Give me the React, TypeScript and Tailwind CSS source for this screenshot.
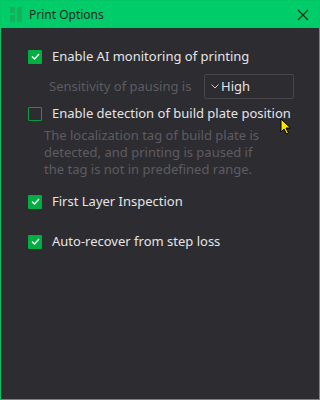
import React from "react";

function Check({ checked }: { checked: boolean }) {
  if (!checked) {
    return <span className="block h-[14px] w-[14px] shrink-0 rounded-[1px] border border-[#0e9b3f]" />;
  }
  return (
    <span className="flex h-[14px] w-[14px] shrink-0 items-center justify-center rounded-[1px] bg-[#00ae42]">
      <svg width="9" height="7" viewBox="0 0 9 7" fill="none">
        <path d="M1 3.5 L3.5 6 L8 1" stroke="#fff" strokeWidth="1.4" />
      </svg>
    </span>
  );
}

function Option({ checked, label }: { checked: boolean; label: string }) {
  return (
    <div className="flex h-[17px] items-center gap-[10px] pl-[27px]">
      <Check checked={checked} />
      <span className="text-[13px] leading-[17px] text-[#e4e4e6]">{label}</span>
    </div>
  );
}

export default function App() {
  return (
    <div
      className="flex h-[400px] w-[320px] flex-col border border-[#00c764] bg-[#2d2c31]"
      style={{ fontFamily: '"Noto Sans", "Open Sans", sans-serif' }}
    >
      <div className="flex h-[27px] shrink-0 items-center bg-[#00cc6a] pl-[9px] pr-[9px]">
        <svg width="12" height="15" viewBox="0 0 12 15" className="mr-[7px]">
          <rect x="0" y="0" width="5" height="6" fill="#17b05a" />
          <rect x="7" y="0" width="5" height="15" fill="#17b05a" />
          <rect x="0" y="8" width="5" height="7" fill="#17b05a" />
        </svg>
        <span className="flex-1 text-[12px] text-[#1c2a22]">Print Options</span>
        <svg width="12" height="12" viewBox="0 0 12 12" className="mr-[1px]">
          <path d="M1 1 L11 11 M11 1 L1 11" stroke="#10301c" strokeWidth="1.2" />
        </svg>
      </div>

      <div className="relative flex flex-1 flex-col pt-[20px]">
        <Option checked label="Enable AI monitoring of printing" />
        <div className="mt-[9px] flex items-center pl-[48px]">
          <span className="w-[155px] text-[13px] text-[#5c5c61]">Sensitivity of pausing is</span>
          <div className="flex h-[25px] w-[90px] items-center rounded-[2px] border border-[#48474c] pl-[6px]">
            <svg width="8" height="5" viewBox="0 0 8 5" className="mr-[2px]">
              <path d="M0.5 0.5 L4 4 L7.5 0.5" stroke="#c8c8cc" strokeWidth="1" fill="none" />
            </svg>
            <span className="text-[13px] text-[#e4e4e6]">High</span>
          </div>
        </div>

        <div className="mt-[6px]">
          <Option checked={false} label="Enable detection of build plate position" />
        </div>
        <p className="mt-[5px] pl-[43px] text-[13px] leading-[17px] text-[#5c5c61]">
          The localization tag of build plate is
          <br />
          detected, and printing is paused if
          <br />
          the tag is not in predefined range.
        </p>

        <div className="mt-[15px]">
          <Option checked label="First Layer Inspection" />
        </div>
        <div className="mt-[23px]">
          <Option checked label="Auto-recover from step loss" />
        </div>

        <svg width="12" height="17" viewBox="0 0 12 17" className="absolute left-[279px] top-[90px]">
          <path d="M1 1 L1 14 L4 11 L6.5 16 L8.5 15 L6 10 L10.5 10 Z" fill="#f5e400" stroke="#000" strokeWidth="1" />
        </svg>
      </div>
    </div>
  );
}
